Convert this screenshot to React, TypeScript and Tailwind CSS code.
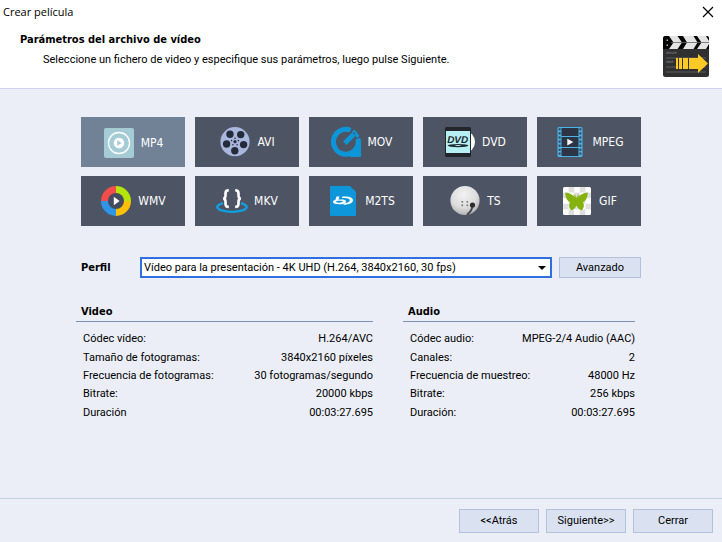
import { useState, type ReactNode } from "react";

function Mp4Icon() {
  return (
    <svg width="32" height="32" viewBox="0 0 32 32" aria-hidden="true">
      <rect x="1" y="1" width="30" height="30" rx="2" fill="#a5ccd5" />
      <circle cx="16" cy="16" r="10.5" fill="none" stroke="#fff" strokeWidth="1.3" />
      <circle cx="16" cy="16" r="5.3" fill="#fff" />
      <path d="M14.3 13.2v5.6l4.4-2.8z" fill="#a5ccd5" />
    </svg>
  );
}

const reelHoles = [[11, 8.3], [21.7, 8.6], [7.6, 18], [24.6, 18.6], [15.8, 24.8]];
const reelPins = [[16, 12.3], [12.6, 14.6], [19.4, 14.6], [13.9, 18.8], [18.1, 18.8]];

function AviIcon() {
  return (
    <svg width="32" height="32" viewBox="0 0 32 32" aria-hidden="true">
      <circle cx="16" cy="15.7" r="14.6" fill="#a9b7dd" />
      {reelHoles.map(([x, y]) => (
        <circle key={`${x}-${y}`} cx={x} cy={y} r="3.7" fill="#252b3b" />
      ))}
      <circle cx="16" cy="15.7" r="1.6" fill="#252b3b" />
      {reelPins.map(([x, y]) => (
        <circle key={`${x}-${y}`} cx={x} cy={y} r="0.8" fill="#252b3b" />
      ))}
    </svg>
  );
}

function MovIcon() {
  return (
    <svg width="32" height="32" viewBox="0 0 32 32" aria-hidden="true">
      <path d="M20.500 4.300A12.400 12.400 0 1 0 27.800 12.500" fill="none" stroke="#0c96d8" strokeWidth="5" />
      <path d="M31 14v17H20.500L18 28l6-3.500 2.500-8.500z" fill="#0c96d8" />
      <path d="M14.800 17.200 24 8" stroke="#0c96d8" strokeWidth="4.800" />
      <path d="m23.300 4.600 5 6.400" stroke="#0c96d8" strokeWidth="3.200" />
      <circle cx="24.200" cy="7.400" r="0.900" fill="#4d5464" />
    </svg>
  );
}

function DvdIcon() {
  return (
    <svg width="32" height="32" viewBox="0 0 32 32" aria-hidden="true">
      <ellipse cx="20.5" cy="16" rx="10.5" ry="11" fill="#fff" />
      <rect x="1" y="1" width="26" height="30" rx="1.5" fill="#22252a" />
      <rect x="2" y="5" width="24" height="22" fill="#b6f0f2" />
      <text x="13.7" y="16.8" textAnchor="middle" textRendering="geometricPrecision" className="fill-[#1c2a30] font-['Liberation_Sans'] text-[10px] font-bold italic">
        DVD
      </text>
      <ellipse cx="14" cy="19.6" rx="10.5" ry="1.6" fill="#1c2a30" />
      <ellipse cx="14" cy="19.5" rx="3" ry="0.6" fill="#b6f0f2" />
    </svg>
  );
}

const perforations = [3.2, 7.3, 11.4, 15.5, 19.6, 23.7, 27.5];

function MpegIcon() {
  return (
    <svg width="32" height="32" viewBox="0 0 32 32" aria-hidden="true">
      <rect x="3.5" y="1" width="25" height="30" rx="1.5" fill="#4ab4e8" />
      <rect x="7.5" y="2" width="17" height="8" fill="#2d3443" />
      <rect x="7.5" y="11" width="17" height="10" fill="#2d3443" />
      <rect x="7.5" y="22" width="17" height="8" fill="#2d3443" />
      {perforations.map((y) => (
        <g key={y} fill="#3d4658">
          <rect x="4.6" y={y - 1} width="2" height="2.2" />
          <rect x="25.4" y={y - 1} width="2" height="2.2" />
        </g>
      ))}
      <path d="M13.3 12.8v6.6l6-3.3z" fill="#fff" />
    </svg>
  );
}

function WmvIcon() {
  return (
    <svg width="32" height="32" viewBox="0 0 32 32" aria-hidden="true">
      <path d="M16 16V1A15 15 0 0 0 1 16z" fill="#f24d4a" />
      <path d="M16 16h15A15 15 0 0 0 16 1z" fill="#b5e40a" />
      <path d="M16 16v15A15 15 0 0 0 31 16z" fill="#ffbf05" />
      <path d="M16 16H1a15 15 0 0 0 15 15z" fill="#2f95e6" />
      <circle cx="16" cy="16" r="8" fill="#454b5e" />
      <path d="M13.8 11.8v8.4l5.8-4.2z" fill="#fff" />
    </svg>
  );
}

function MkvIcon() {
  return (
    <svg width="32" height="32" viewBox="0 0 32 32" aria-hidden="true">
      <ellipse cx="16" cy="22" rx="14.700" ry="4.900" fill="none" stroke="#129fe0" strokeWidth="2.400" />
      <path d="M7 12h18v11H7z" fill="#4d5464" />
      <path
        d="M12.800 5.300c-2.700 0-3.300.9-3.300 2.900v2.600c0 1.800-.7 2.600-2.200 2.800 1.500.2 2.200 1 2.200 2.800v2.600c0 2 .6 2.900 3.300 2.900M19.200 5.300c2.700 0 3.300.9 3.300 2.900v2.600c0 1.800.7 2.600 2.200 2.800-1.500.2-2.200 1-2.200 2.800v2.600c0 2-.6 2.900-3.300 2.900"
        fill="none"
        stroke="#fff"
        strokeWidth="2.600"
      />
    </svg>
  );
}

function M2tsIcon() {
  return (
    <svg width="32" height="32" viewBox="0 0 32 32" aria-hidden="true">
      <path d="M4 1h19l6 6v23a1 1 0 0 1-1 1H4a1 1 0 0 1-1-1V2a1 1 0 0 1 1-1z" fill="#0d97da" />
      <path d="M15 11.800c6-.8 11 .7 11 3.500 0 2.600-3.800 4.400-9.500 4.500v-1.500c3.800-.1 6.300-1.300 6.300-3 0-1.900-3.300-2.700-7.800-2.300z" fill="#fff" />
      <path d="M9.500 11.500h3l-1 3.200c4.500-.4 7.500.1 7.500 1.700 0 1.900-3 2.800-7 2.800-3.700 0-6-.7-6-2.200 0-.9.700-1.500 2.300-1.900zM9.500 16c-1 .9-.2 1.700 2.300 1.700s4-.5 4-1.200-2-.9-6.300-.5z" fill="#fff" fillRule="evenodd" />
    </svg>
  );
}

function TsIcon() {
  return (
    <svg width="32" height="32" viewBox="0 0 32 32" aria-hidden="true">
      <defs>
        <radialGradient id="dish" cx="0.45" cy="0.3" r="0.75">
          <stop offset="0" stopColor="#f2f2f2" />
          <stop offset="0.6" stopColor="#dcdcdc" />
          <stop offset="1" stopColor="#a9a9a9" />
        </radialGradient>
      </defs>
      <circle cx="16" cy="15.500" r="14.600" fill="url(#dish)" />
      <g fill="#777">
        <rect x="12.500" y="16" width="1.600" height="1.600" />
        <rect x="17.500" y="16" width="1.600" height="1.600" />
        <rect x="12.500" y="19.500" width="1.600" height="1.600" />
        <rect x="17.500" y="19.500" width="1.600" height="1.600" />
      </g>
      <path d="M23.500 20.500c-.2 4-2.500 7-5.500 9.300" fill="none" stroke="#42454b" strokeWidth="2" />
      <circle cx="23.500" cy="20" r="2.600" fill="#2d2d30" />
    </svg>
  );
}

const checkerRows = [0, 1, 2, 3, 4];

function GifIcon() {
  return (
    <svg width="32" height="32" viewBox="0 0 32 32" aria-hidden="true">
      <rect x="2" y="2" width="28" height="28" rx="1.500" fill="#fff" />
      {checkerRows.flatMap((row) =>
        checkerRows
          .filter((col) => (row + col) % 2 === 1)
          .map((col) => (
            <rect key={`${row}-${col}`} x={2 + col * 5.6} y={2 + row * 5.6} width="5.6" height="5.6" fill="#dfdfdf" />
          ))
      )}
      <path
        d="M15.500 13.500C12 9.500 8.500 8 4.300 7.500c0 4.500 1.500 8.500 5 9.800-1.800 1.700-1.600 5.800.9 7.900 2.300-.2 4.200-2 5.300-4.700 1.100 2.700 3 4.500 5.300 4.700 2.500-2.100 2.700-6.200.9-7.900 3.500-1.300 5-5.300 5-9.800-4.200.5-7.700 2-11.200 6z"
        fill="#85b20d"
      />
      <path d="m15.500 13.500-2.300-4M15.500 13.500l2.300-4" stroke="#85b20d" strokeWidth="1" />
    </svg>
  );
}

function ClapperIcon() {
  return (
    <svg width="46" height="41" viewBox="0 0 46 41" aria-hidden="true" className="shrink-0">
      <rect width="46" height="41" rx="2.500" fill="#303030" />
      <path d="M2.500 0h41A2.500 2.500 0 0 1 46 2.500V13H0V2.500A2.500 2.500 0 0 1 2.500 0z" fill="#050505" />
      <g fill="#e4e4e4">
        <path d="M6 0h8.500l4.500 6.500-4.500 6.500H6l4.500-6.500z" />
        <path d="M20 0h10.500l4 6.500-4 6.500H20l4-6.500z" />
        <path d="M34 0h9l3 5v3l-3 5h-9l4.500-6.500z" />
      </g>
      <path d="M8 6.500h38" stroke="#666" strokeWidth="0.800" />
      <path d="M3.500 3.500h1.500v1.500H3.500zM3.500 8.500h1.500V10H3.500z" fill="#aaa" />
      <path d="M3 22h40M3 31h40M3 36h40" stroke="#5c5c5c" strokeWidth="1.200" />
      <text x="3" y="17.500" className="fill-[#8a8a8a] font-['Liberation_Sans'] text-[4px]" textRendering="geometricPrecision">
        movie
      </text>
      <text x="3" y="26.500" className="fill-[#8a8a8a] font-['Liberation_Sans'] text-[4px]" textRendering="geometricPrecision">
        take
      </text>
      <path d="M13 22h2v11h-2zM16 22h3v11h-3zM20 22h5v11h-5zM26 22h9v-4l10 9.500L35 37v-4h-9z" fill="#ffc926" />
    </svg>
  );
}

const formats: { name: string; icon: ReactNode }[] = [
  { name: "MP4", icon: <Mp4Icon /> },
  { name: "AVI", icon: <AviIcon /> },
  { name: "MOV", icon: <MovIcon /> },
  { name: "DVD", icon: <DvdIcon /> },
  { name: "MPEG", icon: <MpegIcon /> },
  { name: "WMV", icon: <WmvIcon /> },
  { name: "MKV", icon: <MkvIcon /> },
  { name: "M2TS", icon: <M2tsIcon /> },
  { name: "TS", icon: <TsIcon /> },
  { name: "GIF", icon: <GifIcon /> },
];

const videoRows: [string, string][] = [
  ["Códec vídeo:", "H.264/AVC"],
  ["Tamaño de fotogramas:", "3840x2160 píxeles"],
  ["Frecuencia de fotogramas:", "30 fotogramas/segundo"],
  ["Bitrate:", "20000 kbps"],
  ["Duración", "00:03:27.695"],
];

const audioRows: [string, string][] = [
  ["Códec audio:", "MPEG-2/4 Audio (AAC)"],
  ["Canales:", "2"],
  ["Frecuencia de muestreo:", "48000 Hz"],
  ["Bitrate:", "256 kbps"],
  ["Duración:", "00:03:27.695"],
];

function Details({ title, rows }: { title: string; rows: [string, string][] }) {
  return (
    <section>
      <h2 className="border-b border-[#7891b5] pl-[5px] font-['DejaVu_Sans_Condensed','DejaVu_Sans',sans-serif] font-bold leading-[18px]">{title}</h2>
      <table className="mt-2 h-[92px] w-full table-fixed">
        <tbody>
          {rows.map(([label, value]) => (
            <tr key={label}>
              <th scope="row" className="w-2/5 whitespace-nowrap p-0 pl-[7px] text-left font-normal">
                {label}
              </th>
              <td className="whitespace-nowrap p-0 text-right">{value}</td>
            </tr>
          ))}
        </tbody>
      </table>
    </section>
  );
}

function FooterButton({ children }: { children: ReactNode }) {
  return (
    <button type="button" className="h-6 w-20 border border-[#b4c1dc] bg-[#dae2f1] hover:bg-[#cdd9ee]">
      {children}
    </button>
  );
}

export default function App() {
  const [format, setFormat] = useState("MP4");

  return (
    <div className="flex min-h-screen flex-col bg-[#ebeef6] font-['Roboto',sans-serif] text-[11px] leading-[14px] text-black">
      <header className="border-b border-[#cfd3e8] bg-white">
        <div className="flex h-6 items-center justify-between pl-[3px] pr-2">
          <span className="font-['Open_Sans',sans-serif]">Crear película</span>
          <button type="button" aria-label="Cerrar ventana">
            <svg width="12" height="12" viewBox="0 0 12 12" aria-hidden="true">
              <path d="M1 1l10 10M11 1L1 11" stroke="#000" strokeWidth="1.200" />
            </svg>
          </button>
        </div>
        <div className="flex h-16 items-start justify-between pl-5 pr-[13px]">
          <div className="pt-[9px]">
            <h1 className="font-['DejaVu_Sans_Condensed','DejaVu_Sans',sans-serif] font-bold">Parámetros del archivo de vídeo</h1>
            <p className="mt-1.5 pl-[23px]">Seleccione un fichero de video y especifique sus parámetros, luego pulse Siguiente.</p>
          </div>
          <div className="pt-3">
            <ClapperIcon />
          </div>
        </div>
      </header>

      <main className="grow px-[81px] pt-7">
        <div className="grid grid-cols-5 gap-x-2.5 gap-y-[9px]">
          {formats.map(({ name, icon }) => (
            <button
              key={name}
              type="button"
              aria-pressed={format === name}
              onClick={() => setFormat(name)}
              className="flex h-[50px] items-center justify-center gap-1.5 bg-[#4d5464] font-['DejaVu_Sans_Condensed','DejaVu_Sans',sans-serif] text-xs text-white aria-pressed:bg-[#718196] aria-pressed:pt-0.5"
            >
              {icon}
              {name}
            </button>
          ))}
        </div>

        <div className="mt-[31px] flex items-center">
          <label htmlFor="profile" className="w-[59px] font-['DejaVu_Sans_Condensed','DejaVu_Sans',sans-serif] font-bold">
            Perfil
          </label>
          <div className="relative grow">
            <select id="profile" className="block h-[21px] w-full appearance-none border-2 border-[#2f6fdf] bg-white pl-0.5 outline-none">
              <option>Vídeo para la presentación - 4K UHD (H.264, 3840x2160, 30 fps)</option>
            </select>
            <svg width="8" height="4" viewBox="0 0 8 4" aria-hidden="true" className="pointer-events-none absolute right-1.5 top-[9px]">
              <path d="M0 0h8L4 4z" fill="#000" />
            </svg>
          </div>
          <button type="button" className="ml-[7px] h-[21px] w-[82px] border border-[#b4c1dc] bg-[#dae2f1] hover:bg-[#cdd9ee]">
            Avanzado
          </button>
        </div>

        <div className="-ml-[5px] mr-1.5 mt-[25px] grid grid-cols-[minmax(0,297fr)_minmax(0,232fr)] gap-[30px]">
          <Details title="Video" rows={videoRows} />
          <Details title="Audio" rows={audioRows} />
        </div>
      </main>

      <footer className="flex h-11 items-start justify-end gap-[7px] border-t border-[#c6cee2] pr-[9px] pt-2.5">
        <FooterButton>&lt;&lt;Atrás</FooterButton>
        <FooterButton>Siguiente&gt;&gt;</FooterButton>
        <FooterButton>Cerrar</FooterButton>
      </footer>
    </div>
  );
}
